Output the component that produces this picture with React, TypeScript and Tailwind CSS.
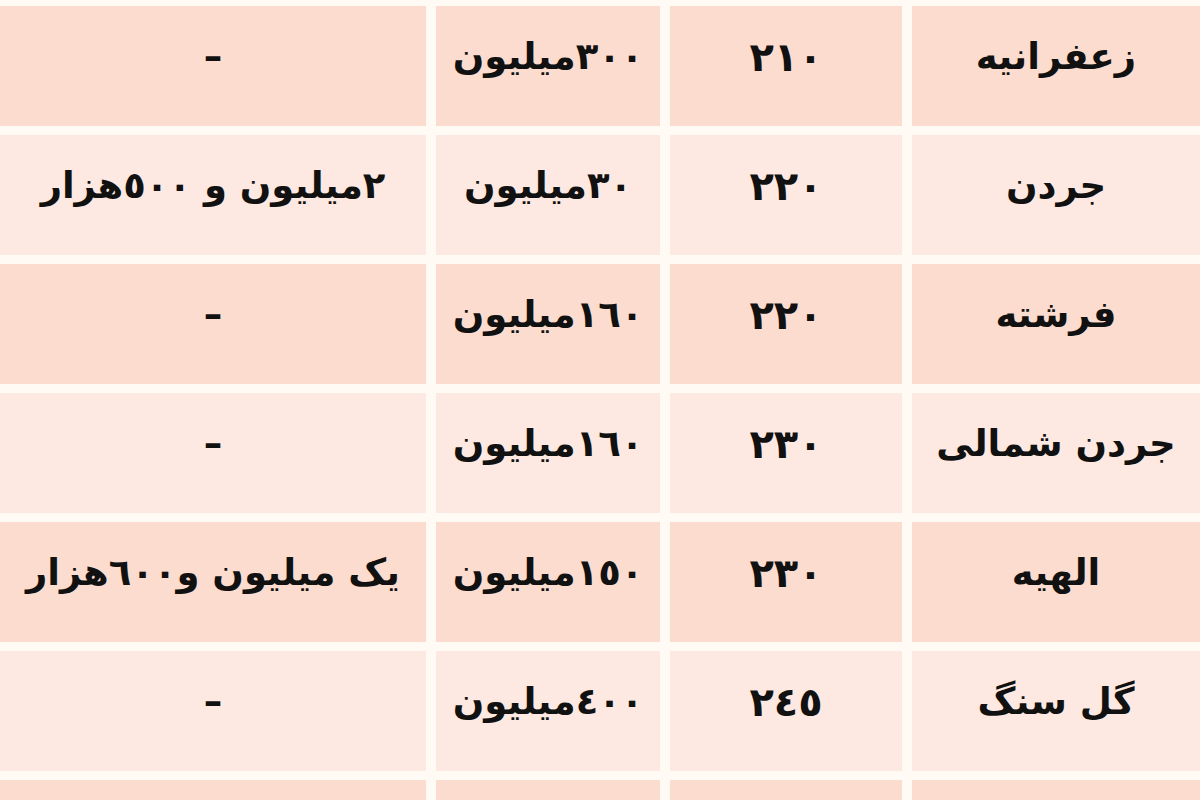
import React from "react";

const rows: [string, string, string, string][] = [
  ["زعفرانیه", "٢١٠", "٣٠٠میلیون", "–"],
  ["جردن", "٢٢٠", "٣٠میلیون", "٢میلیون و ٥٠٠هزار"],
  ["فرشته", "٢٢٠", "١٦٠میلیون", "–"],
  ["جردن شمالی", "٢٣٠", "١٦٠میلیون", "–"],
  ["الهیه", "٢٣٠", "١٥٠میلیون", "یک میلیون و٦٠٠هزار"],
  ["گل سنگ", "٢٤٥", "٤٠٠میلیون", "–"],
  ["", "", "", ""],
];

export default function App() {
  return (
    <div
      className="w-[1200px] h-[800px] overflow-hidden bg-[#fffaf4] pt-[6px]"
      style={{ fontFamily: '"DejaVu Sans", sans-serif' }}
    >
      <div
        dir="rtl"
        className="grid grid-cols-[288px_232px_224px_1fr] gap-x-[10px] gap-y-[9px] auto-rows-[120px]"
      >
        {rows.map((r, i) => {
          const bg = i % 2 === 0 ? "bg-[#fcdccf]" : "bg-[#fde9e1]";
          return r.map((c, j) => (
            <div
              key={`${i}-${j}`}
              className={`${bg} flex items-center justify-center pb-[18px] ${
                j === 1 ? "text-[40px] tracking-[3px]" : "text-[37px]"
              } font-bold text-[#111] whitespace-nowrap overflow-visible`}
            >
              {c}
            </div>
          ));
        })}
      </div>
    </div>
  );
}
